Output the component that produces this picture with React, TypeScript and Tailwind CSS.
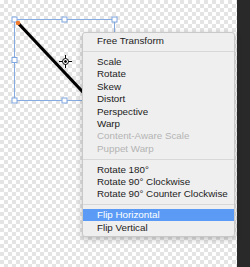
import React from 'react'

type Item = { label: string; disabled?: boolean; active?: boolean } | 'sep'

const items: Item[] = [
  { label: 'Free Transform' },
  'sep',
  { label: 'Scale' },
  { label: 'Rotate' },
  { label: 'Skew' },
  { label: 'Distort' },
  { label: 'Perspective' },
  { label: 'Warp' },
  { label: 'Content-Aware Scale', disabled: true },
  { label: 'Puppet Warp', disabled: true },
  'sep',
  { label: 'Rotate 180°' },
  { label: 'Rotate 90° Clockwise' },
  { label: 'Rotate 90° Counter Clockwise' },
  'sep',
  { label: 'Flip Horizontal', active: true },
  { label: 'Flip Vertical' },
]

function Handle({ x, y }: { x: number; y: number }) {
  return <rect x={x - 2.5} y={y - 2.5} width={5} height={5} fill="#fff" stroke="#7ea6e0" strokeWidth={1} />
}

function TransformBox() {
  return (
    <svg className="absolute left-0 top-0" width={237} height={267}>
      <rect x={14.5} y={19.5} width={100} height={81} fill="none" stroke="#86abe3" strokeWidth={1} />
      <line x1={18} y1={23} x2={96} y2={106} stroke="#000" strokeWidth={3.2} />
      <Handle x={14.5} y={19.5} />
      <Handle x={64.5} y={19.5} />
      <Handle x={114.5} y={19.5} />
      <Handle x={14.5} y={60} />
      <Handle x={14.5} y={100.5} />
      <Handle x={64.5} y={100.5} />
      <circle cx={18} cy={23} r={2.3} fill="#f07a2c" />
      {/* reference point */}
      <g stroke="#000" strokeWidth={1} fill="none">
        <circle cx={65.5} cy={61.5} r={3} fill="#fff" />
        <circle cx={65.5} cy={61.5} r={1} fill="#000" />
        <line x1={65.5} y1={55} x2={65.5} y2={58.5} />
        <line x1={65.5} y1={64.5} x2={65.5} y2={68} />
        <line x1={59} y1={61.5} x2={62.5} y2={61.5} />
        <line x1={68.5} y1={61.5} x2={72} y2={61.5} />
      </g>
    </svg>
  )
}

function ContextMenu() {
  return (
    <div className="absolute left-[82px] top-[32px] w-[153px] rounded-[3px] border border-[#c9c9c9] bg-[#efefef] py-[2px] shadow-[0_2px_6px_rgba(0,0,0,0.25)]">
      {items.map((it, i) =>
        it === 'sep' ? (
          <div key={i} className="flex h-[8.4px] items-center">
            <div className="h-px w-full bg-[#d8d8d8]" />
          </div>
        ) : (
          <div
            key={i}
            className={`flex h-[12.4px] items-center whitespace-nowrap pl-[14px] text-[9.8px] leading-none ${
              it.active ? 'bg-[#5b9bf5] text-white' : it.disabled ? 'text-[#b4b4b4]' : 'text-[#1c1c1c]'
            }`}
          >
            {it.label}
          </div>
        )
      )}
    </div>
  )
}

export default function App() {
  return (
    <div className="flex h-[267px] w-[250px] overflow-hidden font-['Liberation_Sans',Arial,sans-serif]">
      <div className="relative flex-1 bg-[image:repeating-conic-gradient(#e4e4e4_0_25%,#ffffff_0_50%)] bg-[length:8px_8px]">
        <TransformBox />
        <ContextMenu />
      </div>
      <div className="w-[13px] bg-[#292929]" />
    </div>
  )
}
